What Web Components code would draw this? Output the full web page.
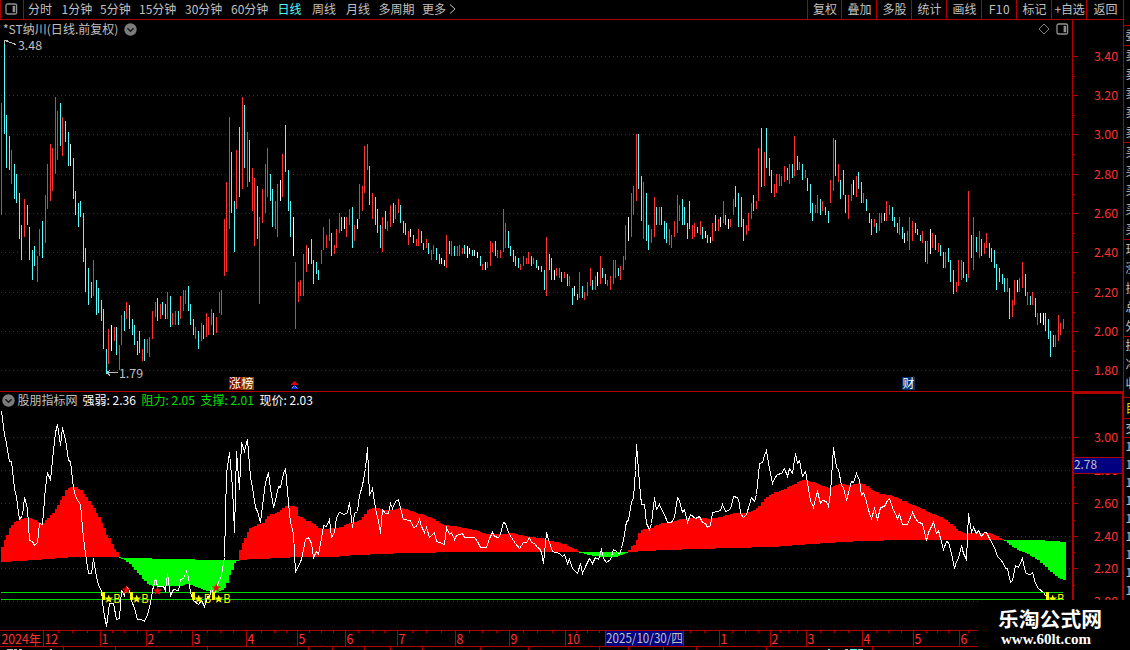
<!DOCTYPE html>
<html lang="zh-CN">
<head>
<meta charset="utf-8">
<title>*ST纳川 日线</title>
<style>
html,body{margin:0;height:100%;background:#000;overflow:hidden}
body{font:12px/16px "Noto Sans CJK SC",sans-serif;color:#c0c0c0;--line:#b00000;--num:#ff3232}
</style>
</head>
<body>
<stock-terminal></stock-terminal>
<script>
const UP='#ff3232', DOWN='#54fcfc', FLAT='#ffffff';
const CANDLES=`
103 215 r,40 134 c,115 168 c,136 170 c,150 184 r,164 199 c,174 203 c,193 239 c,225 260 c,199 237 r,
205 225 c,227 260 c,250 280 c,246 266 c,256 282 r,229 256 r,221 258 c,195 243 r,164 209 r,144 201 r,
148 191 r,97 174 r,111 160 r,103 146 c,117 156 r,121 142 c,132 166 c,144 166 w,158 199 c,191 215 c,
203 227 c,201 217 c,213 262 c,248 292 c,268 305 c,282 298 c,260 296 r,280 315 c,288 313 c,300 321 c,
309 349 c,349 374 c,329 364 r,325 351 w,327 341 r,327 355 c,345 370 r,315 345 r,311 331 c,302 319 r,
305 329 c,319 335 c,325 345 c,341 355 c,331 353 c,349 361 r,339 361 c,339 353 r,337 357 r,311 339 r,
302 317 r,298 321 c,304 319 r,302 315 c,304 319 c,292 319 r,296 327 c,313 325 r,311 325 r,311 325 c,
296 319 r,290 311 r,290 304 r,286 311 c,304 325 c,319 335 c,327 339 r,331 349 c,323 341 r,325 339 c,
313 337 r,317 335 r,309 325 r,313 335 c,317 333 r,292 313 r,290 315 r,219 276 r,182 272 r,117 229 r,
152 213 c,201 252 c,150 209 r,127 197 c,97 189 r,105 168 c,132 187 r,140 182 c,168 211 r,178 246 r,
186 239 c,217 304 r,189 223 r,164 213 r,148 197 r,174 201 c,189 227 c,201 229 r,184 237 r,180 201 w,
154 197 r,125 172 c,170 211 c,201 237 c,217 256 w,262 329 r,282 302 r,280 296 r,254 296 r,245 272 r,
248 264 w,239 264 c,260 284 c,262 274 c,270 280 c,250 264 r,227 250 r,235 248 r,219 241 r,233 256 c,
245 254 r,229 248 r,213 233 r,217 231 c,217 229 w,217 237 r,209 225 r,207 248 c,225 241 r,219 229 w,
184 219 r,186 211 r,146 193 r,144 170 r,166 205 c,193 219 r,197 225 c,209 233 c,225 248 c,217 252 r,
211 229 c,221 231 r,205 227 r,203 223 c,205 219 r,199 213 r,205 223 c,221 233 c,223 235 c,231 245 r,
229 237 w,235 243 c,239 246 r,229 246 r,231 243 c,243 250 c,239 248 r,243 254 c,250 260 r,245 254 r,
248 260 c,254 264 c,258 264 w,260 266 w,235 268 r,241 254 c,241 256 r,246 256 c,246 256 r,245 256 r,
248 254 r,245 254 c,246 258 w,248 254 w,250 256 c,250 256 w,252 258 w,256 266 c,264 270 r,262 270 w,
262 268 r,241 266 r,243 252 r,241 256 c,250 258 r,250 258 r,209 252 r,223 248 r,231 248 c,246 256 c,
250 262 c,256 266 c,258 268 c,264 270 r,256 266 r,258 264 r,252 264 r,256 266 c,258 264 r,260 268 c,
266 270 w,266 272 c,270 290 c,237 296 r,254 270 c,258 280 c,270 280 w,268 276 r,268 278 r,272 282 c,
272 278 r,274 286 c,276 286 r,288 305 c,286 296 w,294 300 c,272 298 r,286 298 c,292 300 r,282 296 r,
268 286 r,280 290 c,276 290 r,272 286 w,256 284 r,268 278 c,274 284 c,280 286 r,276 290 r,260 284 r,
260 278 r,268 276 c,266 280 r,256 270 r,225 260 r,217 241 w,193 237 r,186 215 r,134 201 r,134 189 c,
176 221 c,182 239 r,193 241 c,225 250 c,229 243 r,197 237 r,207 225 c,207 225 r,207 225 c,221 239 c,
223 243 c,229 245 r,235 248 r,221 237 r,195 233 r,205 221 r,199 225 c,207 225 c,223 239 c,201 229 c,
225 239 r,223 237 r,227 233 c,221 235 r,227 239 c,231 238 w,235 243 c,237 243 w,223 241 r,215 231 c,
219 231 r,217 227 w,201 223 r,215 225 c,219 229 w,219 227 r,199 215 r,186 207 c,193 227 c,197 227 c,
219 241 c,225 235 r,213 231 r,203 219 r,195 211 c,201 209 r,148 201 r,128 187 c,152 186 r,128 168 c,
158 176 c,170 193 c,184 197 r,174 193 r,174 186 r,176 186 r,166 182 r,168 180 c,164 184 r,164 178 c,
136 176 r,156 170 c,162 170 r,164 180 c,170 178 r,178 191 c,184 213 c,203 221 c,205 213 r,195 213 r,
199 215 c,201 211 r,207 215 c,211 223 c,180 203 r,138 191 r,140 176 c,164 182 r,180 199 c,170 195 c,
195 213 c,195 219 r,184 201 r,180 195 w,176 197 r,172 189 c,182 203 c,193 203 r,199 211 c,213 223 c,
219 235 c,219 227 r,223 233 c,213 231 r,213 223 r,213 221 w,201 221 r,205 215 r,207 221 c,217 227 c,
223 233 c,217 235 r,227 239 c,233 243 w,231 241 r,217 250 r,221 241 r,223 233 c,229 235 c,235 241 c,
231 243 r,241 262 c,241 264 r,229 254 w,233 248 r,235 250 c,243 252 r,245 256 c,252 268 c,252 268 r,
248 262 c,260 282 c,270 294 c,282 292 r,260 286 r,260 280 r,262 278 c,274 282 c,191 278 r,235 258 c,
217 270 r,237 252 c,231 258 r,239 256 c,243 254 r,233 248 r,243 258 c,248 262 c,250 268 c,264 290 c,
268 282 c,274 284 c,278 292 c,278 292 r,288 319 c,300 317 r,280 305 r,280 292 w,278 292 r,262 288 r,
274 296 c,292 305 r,296 305 c,292 305 r,298 317 c,313 325 r,313 323 w,313 325 w,313 331 c,319 339 c,
331 357 c,335 347 c,335 347 r,315 341 r,323 335 r,319 329 r`.trim().split(/,\s*/).map(s=>s.split(' '));
const barX=i=>Math.round(1+2.559*i);

const STRENGTH='1,411 4,434 6,443 9,461 11,461 14,488 16,497 19,519 22,515 24,497 27,508 29,540 32,541 34,545 37,542 39,523 42,524 45,487 47,472 50,480 53,450 55,432 57,424 60,445 62,427 65,439 68,460 70,461 73,488 76,498 80,504 83,538 85,553 88,573 91,573 93,558 96,577 99,587 101,590 103,610 106,626 109,603 113,603 116,619 119,618 121,590 124,595 126,586 129,590 131,600 134,608 137,619 141,619 144,621 147,614 150,603 152,590 155,578 157,586 163,586 165,590 167,573 170,595 173,589 178,590 180,579 183,578 186,571 188,577 190,592 193,600 198,604 201,600 204,606 207,596 209,597 211,587 213,597 216,587 218,582 221,575 224,557 226,473 229,452 232,487 234,532 236,451 239,489 241,442 244,451 247,439 250,477 252,487 255,507 257,511 260,522 262,505 265,482 268,472 270,488 273,507 275,500 278,486 280,487 283,473 285,468 288,502 290,522 293,533 295,572 301,559 305,539 308,537 311,543 313,557 316,551 318,554 321,538 323,525 326,526 329,519 331,537 334,532 336,517 339,512 344,514 347,512 349,502 352,527 354,513 357,511 359,495 362,485 365,468 367,447 369,495 372,488 375,508 378,520 380,533 382,509 385,513 388,513 390,503 392,508 395,501 398,499 401,512 403,519 410,520 413,527 416,526 419,519 421,526 424,532 426,527 429,537 432,534 434,532 436,541 439,542 444,544 446,527 449,534 451,532 454,539 456,535 462,533 464,537 474,537 477,541 480,547 486,547 489,538 492,532 494,536 498,537 500,534 503,522 505,523 508,532 511,537 515,543 519,548 523,542 526,542 529,537 531,542 534,543 537,547 539,548 541,552 543,563 546,532 549,542 552,551 559,553 562,556 564,554 567,563 569,559 572,568 575,571 577,573 580,563 582,573 586,564 589,558 592,563 595,557 598,559 601,549 603,558 606,562 610,559 613,549 616,551 619,554 621,548 623,540 626,521 628,520 631,502 633,497 635,470 636,444 639,483 641,504 644,504 646,523 649,529 651,523 654,497 656,509 659,504 662,511 664,514 667,522 671,522 674,517 677,497 679,500 682,512 684,509 687,522 690,514 695,518 699,516 702,522 705,523 707,527 710,525 712,512 717,511 720,510 722,504 725,511 730,509 733,496 737,497 739,503 740,513 743,517 746,514 749,504 751,497 754,501 756,494 759,463 762,462 764,455 766,450 769,468 772,483 774,478 777,474 781,473 784,468 787,476 789,468 792,473 795,453 797,463 799,460 802,476 805,471 807,482 810,500 813,507 815,498 817,491 820,503 822,500 826,501 828,506 830,492 833,447 836,467 838,469 841,485 843,487 846,500 848,492 851,481 853,482 856,473 859,480 861,495 863,492 866,501 869,513 871,518 874,508 877,519 880,507 884,506 887,500 889,498 892,507 897,518 899,514 902,524 907,524 912,512 915,518 918,522 922,523 926,540 928,532 930,528 933,522 936,533 938,530 940,538 943,549 946,541 948,542 951,553 954,568 956,561 958,558 961,545 963,553 966,559 968,513 971,532 973,527 976,533 978,530 981,536 984,532 986,532 989,538 994,547 997,556 1000,559 1003,563 1005,568 1007,568 1010,582 1012,580 1015,565 1018,567 1022,558 1025,572 1028,574 1030,574 1032,572 1035,583 1038,588 1043,592 1047,598';
const FAST='1,547 4,540 7,532 10,526 14,522 18,519 29,518 33,519 38,523 42,523 47,518 53,512 60,500 65,490 69,487 75,487 81,491 87,500 93,508 100,520 106,535 113,547 118,556 121,558 128,563 137,573 147,584 153,586 178,586 187,584 193,586 203,590 210,592 217,592 224,588 227,580 230,572 233,565 236,560 239,550 244,538 249,528 255,525 262,523 268,515 277,512 283,507 288,505 295,507 297,515 302,519 312,523 319,529 333,528 340,527 348,523 360,520 367,510 372,508 379,508 382,510 392,510 396,508 405,509 413,512 423,515 433,519 443,525 452,526 463,528 475,530 484,534 498,534 513,533 523,536 540,538 550,541 563,544 572,548 578,552 585,554 592,556 603,557 613,557 622,555 627,552 629,548 635,543 638,533 642,529 650,528 660,523 672,522 680,519 690,518 705,518 709,519 720,517 733,513 745,513 755,509 763,500 770,494 783,489 797,482 803,480 808,481 817,484 828,488 837,484 850,485 858,483 863,484 870,489 880,494 890,495 903,501 917,507 930,513 942,518 952,525 958,531 965,534 968,533 990,533 998,537 1003,540 1010,546 1017,550 1027,554 1037,560 1047,569 1055,576 1062,580 1066,580';
const SLOW='1,562 33,560 72,557 98,557 120,557.5 150,558.5 194,559.5 236,560 300,557 335,557 337,556 377,554 405,553 462,552 577,551.6 628,552 663,550 730,548 770,547 802,544.6 842,542 863,541 902,540 1002,540 1042,540.4 1066,542';
const series=s=>{const p=s.split(' ').map(q=>q.split(',').map(Number));
  return x=>{let k=1;while(k<p.length-1&&p[k][0]<x)k++;const [a,b]=p[k-1],[c,d]=p[k];return b+(d-b)*(x-a)/(c-a)}};
const rect=(x,y,w,h,f)=>`<rect x="${x}" y="${y}" width="${w}" height="${h}" fill="${f}"/>`;
const grid=ys=>ys.map(y=>`<path d="M1 ${y+.5}H1071" stroke="#b00000" stroke-dasharray="1 3"/>`).join('');
const star=(cx,cy,r,f)=>{let p='';for(let i=0;i<10;i++){const a=Math.PI*(i/5-.5),q=i%2?r*.42:r;p+=`${(cx+q*Math.cos(a)).toFixed(1)},${(cy+q*Math.sin(a)).toFixed(1)} `}return `<polygon points="${p}" fill="${f}" shape-rendering="auto"/>`};
const label=(x,y,s,f,w,size=12)=>`<text x="${x}" y="${y}" fill="${f}" font-size="${size}" ${w?`textLength="${w}" lengthAdjust="spacingAndGlyphs"`:''}>${s}</text>`;

class View extends HTMLElement{
  connectedCallback(){
    const t=document.createElement('template');
    t.innerHTML=`<style>:host{display:block;box-sizing:border-box}svg{display:block}text{white-space:pre}${this.css||''}</style>${this.render()}`;
    (this.shadowRoot||this.attachShadow({mode:'open'})).replaceChildren(t.content.cloneNode(true));
  }
}
const define=(n,css,render)=>customElements.define(n,class extends View{get css(){return css}render(){return render(this)}});

define('panel-icon','',()=>`<svg width="13" height="12" fill="none" stroke="#909090" stroke-width="1.3"><rect x="1" y="1" width="10.6" height="10" rx="1.6"/><rect x="7.6" y="2.8" width="2.6" height="6.4" fill="#909090" stroke="none"/></svg>`);
define('drop-icon','',()=>`<svg width="13" height="13"><circle cx="6.5" cy="6.5" r="6.2" fill="#7c7c7c"/><path d="M3.4 5.3L6.5 8.3L9.6 5.3" fill="none" stroke="#181818" stroke-width="1.5"/></svg>`);
define('period-tab',':host{white-space:nowrap;flex:none}:host([active]){color:#54fcfc}',()=>'<slot></slot>');
define('tool-button',':host{flex:none;border-left:1px solid var(--line);padding-left:1px;text-align:center;white-space:nowrap}',()=>'<slot></slot>');
define('tool-bar',`:host{display:flex;height:20px;border-bottom:1px solid var(--line);line-height:18px}
 .ic{width:24px;border:solid var(--line);border-width:0 1px;padding:3px 0 0 4px;box-sizing:border-box;margin-right:4px}
 .sp{flex:1}svg{display:inline-block}`,()=>{
 const tabs=[['分时',33.5],['1分钟',38.5],['5分钟',39],['15分钟',46],['30分钟',46],['60分钟',46.5],['日线',34.5],['周线',34],['月线',32.5],['多周期',43.5]];
 const tools=[['复权',34],['叠加',35],['多股',35],['统计',35],['画线',35],['F10',35],['标记',35],['+自选',35],['返回',37]];
 return `<div class="ic"><panel-icon></panel-icon></div>${tabs.map(([s,w])=>`<period-tab style="width:${w}px"${s=='日线'?' active':''}>${s}</period-tab>`).join('')}<period-tab>更多<svg width="12" height="10" fill="none" stroke="#c0c0c0"><path d="M4 .5L9 5L4 9.5"/></svg></period-tab><span class="sp"></span>${tools.map(([s,w])=>`<tool-button style="width:${w}px;box-sizing:border-box${s=='F10'?';letter-spacing:.6px':s=='+自选'?';letter-spacing:-.2px':''}">${s}</tool-button>`).join('')}`});

define('price-chart',`:host{position:relative;border-bottom:1px solid var(--line)}
 header{position:absolute;left:3px;right:3px;top:0;display:flex;align-items:center;height:18px}
 header span{flex:none;width:116px;letter-spacing:.02px;white-space:nowrap;position:relative}drop-icon{margin-left:5px}header i{flex:1}header svg{margin-right:6px}`,()=>`
 <svg width="1072" height="371" viewBox="0 20 1072 371" shape-rendering="crispEdges">${grid([56,95,134,174,213,252,292,331,370])}
 ${CANDLES.map(([t,b,c],i)=>rect(barX(i),t,1,b-t,c=='r'?UP:c=='c'?DOWN:FLAT)).join('')}
 <g fill="none" stroke="#c0c0c0"><path d="M4.5 40.5L16 44.5M4.5 44V40.5H8M107 372.5H118M107 372.5L110 370M107 372.5L110 375.5"/></g>
 ${label(18,50,'3.48','#c0c0c0',24)}${label(119,378,'1.79','#c0c0c0',24)}
 ${rect(229,377,12,13,'#800000')}${rect(241,377,13,13,'#804000')}${label(229,388,'涨','#fff',12)}${label(241.5,388,'榜','#fff',12)}
 ${rect(902,377,13,13,'#003468')}${label(902.5,388,'财','#fff',12)}
 <path d="M294.5 381L298 385H291Z" fill="#e00000"/><path d="M294.5 385L298 389H291Z" fill="#2020ff"/><path d="M292 388L294.5 385.5L297 388" fill="none" stroke="#40d0ff" stroke-dasharray="1 1"/></svg>
 <header><span>*ST纳川(日线.前复权)</span><drop-icon></drop-icon><i></i><svg width="12" height="12" fill="none" stroke="#808080"><path d="M6 1L11 6L6 11L1 6Z"/></svg><panel-icon></panel-icon></header>`);

define('indicator-chart',`:host{position:relative}
 header{position:absolute;left:1.5px;top:0;display:flex;align-items:center;height:16px;white-space:nowrap}
 header span{flex:none}.w{color:#fff}.g{color:#00e000}`,()=>{
 const fast=series(FAST),slow=series(SLOW);
 const area=CANDLES.map((c,i)=>{const x=barX(i),n=barX(i+1),a=Math.round(fast(x)),b=Math.round(slow(x));return a==b?rect(x,a,n-x,1,'#0f0'):rect(x,Math.min(a,b),n-x,Math.abs(a-b),a<b?'#f00':'#0f0')}).join('');
 const sig=(x,b)=>rect(x,592,3,8,'#ff0')+star(x+6.7,599,4.6,'#ff0')+label(b,603,'B','#ff0',7.4,12);
 return `<svg width="1072" height="238" viewBox="0 392 1072 238" shape-rendering="crispEdges">${grid([437,470,503,536,568,601])}${area}
 ${rect(1,592,1062,1,'#00d800')}${rect(1,599,1062,1,'#00d800')}
 <polyline points="${STRENGTH}" transform="translate(.5 .5)" fill="none" stroke="#fff"/>
 ${sig(102,113.2)}${sig(130,141.2)}${sig(192,203.7)}${sig(212,223.2)}${sig(1046,1057)}
 ${star(126.3,590,4.8,'#f00')}${star(157.5,591,4.8,'#f00')}${star(216.3,588,4.8,'#f00')}</svg>
 <header><drop-icon></drop-icon><span style="width:65px;margin-left:3px">股朋指标网</span><span class="w" style="width:59px">强弱: 2.36</span><span class="g" style="width:59px">阻力: 2.05</span><span class="g" style="width:59px">支撑: 2.01</span><span class="w">现价: 2.03</span></header>`});

define('price-axis','',el=>{
 const low=el.hasAttribute('lower'),y0=low?392:20,h=low?238:372;
 const rows=low?[['3.00',437],['2.80',470],['2.60',503],['2.40',536],['2.20',568],['2.00',601]]:[['3.40',56],['3.20',95],['3.00',134],['2.80',174],['2.60',213],['2.40',252],['2.20',292],['2.00',331],['1.80',370]];
 const L='#b00000';
 let s=rows.map(([t,y],i)=>rect(1073,y,5,1,L)+(i<rows.length-1?rect(1073,Math.round((y+rows[i+1][1])/2),2,1,L):'')+label(1094,y+5,t,'#ff3232',24)).join('');
 s+=low?rect(1072,392,2,238,L)+rect(1072,392,51,2,L)+rect(1122,392,1,238,L)+rect(1074,457,48,17,L)+rect(1074,458,48,15,'#000080')+label(1074,469,'2.78','#c0c0c0',23)
  :rect(1072,20,1,371,L)+rect(1072,391,51,1,L);
 return `<svg width="51" height="${h}" viewBox="1072 ${y0} 51 ${h}" shape-rendering="crispEdges">${s}</svg>`});

define('date-axis','',()=>{
 const L='#b00000',major=[[43,'12'],[100,'1'],[146,'2'],[192,'3'],[246,'4'],[297,'5'],[345,'6'],[397,'7'],[455,'8'],[509,'9'],[565,'10'],[605,''],[683,''],[719,'1'],[770,'2'],[806,'3'],[862,'4'],[913,'5'],[959,'6']];
 const minor=[58,72,87,112,124,137,158,170,181,207,220,233,261,274,286,309,321,333,358,372,384,412,426,441,469,482,496,523,537,552,576,587,599,690,704,732,745,758,780,788,797,820,834,848,876,888,901,926,937,948,968];
 const under=[63,115,207,308,332,364,390,422,480,528,599,628,663,696,766,872];
 return `<svg width="1123" height="20" viewBox="0 630 1123 20" shape-rendering="crispEdges">${rect(0,630,978,1,L)}${rect(0,646,978,1,L)}
 ${minor.map(x=>rect(x,631,1,2,L)).join('')}${under.map(x=>rect(x,647,1,3,L)).join('')}
 ${label(1.5,643.5,'2024年','#ff3232',39.5,13)}
 ${major.map(([x,t])=>rect(x,631,1,15,L)+(t?label(x+1.5,643.5,t,'#ff3232',t.length>1?13.5:6.8,13):'')).join('')}
 ${rect(606,631,77,15,'#000080')}${label(606,642.5,'2025/10/30/四','#c0c0c0',77,12.5)}
 <path d="M7 649.5H13M14 649.5H17M19 649.5H22M50 649.5H52M845 649.5H848M858 649.5H863" stroke="#c0c0c0"/><path d="M828 649.5H830M850 649.5H857" stroke="#54fcfc"/></svg>`});

define('quote-strip',':host{border-left:1px solid var(--line);overflow:hidden}',()=>{
 const t=(s,y,c='#c0c0c0')=>label(1125.5,y,s,c);
 return `<svg width="6" height="650" viewBox="1124 0 6 650">${[25,45,142,239,336,397,418,437].map(y=>rect(1124,y,6,1,'#b00000')).join('')}
 ${t('委',40)}${[0,1,2,3,4].map(i=>t('卖',59.5+i*19.3)+t('买',156.5+i*19.3)).join('')}
 ${['现','涨','振','总','外'].map((c,i)=>t(c,254+i*19.3)).join('')}${t('换',350)}${t('净',369)}${t('收',388)}${t('目',413,'#e0e000')}${t('交',433)}
 ${[0,1,2,3,4,5,6,7,8].map(i=>t('1',451+i*18)).join('')}</svg>`});

define('site-mark',':host{background:#000}',()=>`<svg width="152" height="50" viewBox="978 600 152 50">
 <text x="998" y="626.5" font-size="20" font-weight="700" fill="#fff" textLength="104" lengthAdjust="spacingAndGlyphs">乐淘公式网</text>
 <text x="1001" y="643.5" font-family="Liberation Serif,serif" font-size="14.5" font-weight="700" fill="#fff" textLength="90" lengthAdjust="spacingAndGlyphs">www.60lt.com</text></svg>`);

define('stock-terminal',`:host{position:relative;display:grid;width:1130px;height:650px;grid-template:20px 372px 238px 20px / 1072px 51px 7px;background:#000;overflow:hidden}
 tool-bar,date-axis{grid-column:1 / 3}quote-strip{grid-area:1 / 3 / 5 / 4}date-axis{grid-row:4}
 site-mark{position:absolute;right:0;bottom:0}`,()=>`
 <tool-bar></tool-bar><price-chart></price-chart><price-axis></price-axis><indicator-chart></indicator-chart><price-axis lower></price-axis><date-axis></date-axis><quote-strip></quote-strip><site-mark></site-mark>`);
</script>
</body>
</html>
